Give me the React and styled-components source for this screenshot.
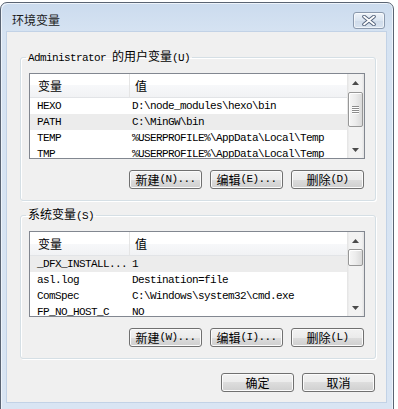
import styled, { createGlobalStyle } from 'styled-components'

const GlobalStyle = createGlobalStyle`
  html, body {
    margin: 0;
    padding: 0;
    background: #ffffff;
  }
  body {
    font-family: "Noto Sans CJK SC", "Liberation Sans", sans-serif;
    font-size: 12px;
    color: #000;
  }
`

const userVars = [
  { name: 'HEXO', value: 'D:\\node_modules\\hexo\\bin' },
  { name: 'PATH', value: 'C:\\MinGW\\bin', selected: true },
  { name: 'TEMP', value: '%USERPROFILE%\\AppData\\Local\\Temp' },
  { name: 'TMP', value: '%USERPROFILE%\\AppData\\Local\\Temp' },
]

const sysVars = [
  { name: '_DFX_INSTALL...', value: '1', selected: true },
  { name: 'asl.log', value: 'Destination=file' },
  { name: 'ComSpec', value: 'C:\\Windows\\system32\\cmd.exe' },
  { name: 'FP_NO_HOST_C', value: 'NO' },
]

function Arrow ({ down })
{
  return (
    <svg width="7" height="4" viewBox="0 0 7 4">
      { down
        ? <polygon points="0,0 7,0 3.5,4" fill="#4a4a4a" />
        : <polygon points="0,4 7,4 3.5,0" fill="#4a4a4a" /> }
    </svg>
  )
}

function ScrollBar ({ thumbTop, thumbHeight })
{
  return (
    <Scroll>
      <ArrowButton><Arrow /></ArrowButton>
      <Track>
        <Thumb $top={ thumbTop } $height={ thumbHeight }>
          { thumbHeight > 24 ? <Grip><i /><i /><i /><i /></Grip> : null }
        </Thumb>
      </Track>
      <ArrowButton><Arrow down /></ArrowButton>
    </Scroll>
  )
}

function VarList ({ rows, thumbTop, thumbHeight })
{
  return (
    <ListBox>
      <Table>
        <HeaderRow>
          <HeaderCell $first>变量</HeaderCell>
          <HeaderCell>值</HeaderCell>
        </HeaderRow>
        { rows.map( ( r, i ) => (
          <Row key={ i } $selected={ r.selected }>
            <NameCell>{ r.name }</NameCell>
            <ValueCell>{ r.value }</ValueCell>
          </Row>
        ) ) }
      </Table>
      <ScrollBar thumbTop={ thumbTop } thumbHeight={ thumbHeight } />
    </ListBox>
  )
}

function App ()
{
  return (
    <>
      <GlobalStyle />
      <Window>
        <TitleBar>
          <Title>环境变量</Title>
          <CloseButton>
            <svg width="14" height="11" viewBox="0 0 14 11">
              <path d="M2 1.5 L12 9.5 M12 1.5 L2 9.5" stroke="#52617a" strokeWidth="3.6" strokeLinecap="round" />
              <path d="M2 1.5 L12 9.5 M12 1.5 L2 9.5" stroke="#ffffff" strokeWidth="1.8" strokeLinecap="round" />
            </svg>
          </CloseButton>
        </TitleBar>
        <Client>
          <Group>
            <Legend><Ascii>Administrator </Ascii>的用户变量<Ascii>(U)</Ascii></Legend>
            <VarList rows={ userVars } thumbTop={ 1 } thumbHeight={ 35 } />
            <ButtonRow>
              <Button>新建<Ascii>(N)...</Ascii></Button>
              <Button>编辑<Ascii>(E)...</Ascii></Button>
              <Button>删除<Ascii>(D)</Ascii></Button>
            </ButtonRow>
          </Group>
          <Group $second>
            <Legend>系统变量<Ascii>(S)</Ascii></Legend>
            <VarList rows={ sysVars } thumbTop={ 0 } thumbHeight={ 17 } />
            <ButtonRow>
              <Button>新建<Ascii>(W)...</Ascii></Button>
              <Button>编辑<Ascii>(I)...</Ascii></Button>
              <Button>删除<Ascii>(L)</Ascii></Button>
            </ButtonRow>
          </Group>
          <DialogButtons>
            <Button>确定</Button>
            <Button>取消</Button>
          </DialogButtons>
        </Client>
      </Window>
    </>
  )
}

const Window = styled.div`
  margin-top: 2px;
  width: 394px;
  box-sizing: border-box;
  border: 1px solid #5a6473;
  border-radius: 7px 7px 0 0;
  background: linear-gradient(#cbdbee 0px, #d6e3f2 30px, #d9e5f3 100%);
  box-shadow: inset 1px 1px 0 #eef4fb, inset -1px 0 0 #eef4fb;
  display: flex;
  flex-direction: column;
`

const TitleBar = styled.div`
  height: 29px;
  box-sizing: border-box;
  padding: 5px 8px 0 11px;
  display: flex;
  align-items: center;
`

const Title = styled.div`
  font-size: 12px;
  line-height: 16px;
  color: #1b1b1b;
`

const CloseButton = styled.div`
  margin-left: auto;
  width: 32px;
  height: 17px;
  box-sizing: border-box;
  border: 1px solid #8b99ad;
  border-radius: 3px;
  background: linear-gradient(#eef3f9, #dbe5f1 50%, #cfdbea 51%, #d8e3f0);
  box-shadow: inset 0 0 0 1px rgba(255, 255, 255, 0.6);
  display: flex;
  align-items: center;
  justify-content: center;
`

const Client = styled.div`
  margin: 0 7px 9px 6px;
  padding: 17px 10px 10px 13px;
  background: #f0f0f0;
  box-shadow: 0 0 0 1px #c2d2e6;
  display: flex;
  flex-direction: column;
`

const Group = styled.fieldset`
  margin: ${ p => p.$second ? '6px' : '0' } 0 0 0;
  padding: 8px 10px 11px 8px;
  min-width: 0;
  border: 1px solid #d5dfe5;
  border-radius: 3px;
  box-shadow: inset 1px 1px 0 #fff, 1px 1px 0 #fff;
`

const Legend = styled.legend`
  padding: 0 2px;
  margin-left: -3px;
  font-size: 12px;
  line-height: 14px;
`

const Ascii = styled.span`
  font-family: "Liberation Mono", monospace;
  font-size: 11px;
  letter-spacing: -0.6px;
`

const ListBox = styled.div`
  height: 86px;
  box-sizing: border-box;
  border: 1px solid #828790;
  background: #fff;
  display: flex;
  overflow: hidden;
`

const Table = styled.div`
  flex: 1;
  min-width: 0;
  overflow: hidden;
`

const HeaderRow = styled.div`
  display: flex;
  height: 24px;
  box-sizing: border-box;
  border-bottom: 1px solid #e2e4e7;
  background: linear-gradient(#ffffff 0%, #ffffff 50%, #f7f8fa 50%, #f1f2f4 100%);
`

const HeaderCell = styled.div`
  ${ p => p.$first ? 'width: 100px; border-right: 1px solid #e5e5e5; padding-left: 8px;' : 'flex: 1; padding-left: 5px;' }
  box-sizing: border-box;
  font-size: 12px;
  line-height: 23px;
  color: #000;
`

const Row = styled.div`
  display: flex;
  height: 16px;
  background: ${ p => p.$selected ? '#ececec' : 'transparent' };
  font-family: "Liberation Mono", monospace;
  font-size: 11px;
  letter-spacing: -0.6px;
  line-height: 16px;
  white-space: nowrap;
`

const NameCell = styled.div`
  width: 100px;
  box-sizing: border-box;
  padding-left: 7px;
  overflow: hidden;
`

const ValueCell = styled.div`
  flex: 1;
  padding-left: 2px;
  overflow: hidden;
`

const Scroll = styled.div`
  width: 17px;
  flex: none;
  display: flex;
  flex-direction: column;
  background: linear-gradient(to right, #e3e3e3, #f2f2f2 15%, #f2f2f2 85%, #e3e3e3);
`

const ArrowButton = styled.div`
  height: 17px;
  flex: none;
  display: flex;
  align-items: center;
  justify-content: center;
`

const Track = styled.div`
  flex: 1;
  display: flex;
  flex-direction: column;
`

const Thumb = styled.div`
  margin: ${ p => p.$top }px 1px 0 1px;
  height: ${ p => p.$height }px;
  box-sizing: border-box;
  border: 1px solid #979797;
  border-radius: 2px;
  background: linear-gradient(to right, #f6f6f6, #ececec 50%, #dadada);
  box-shadow: inset 1px 1px 0 #fff;
  display: flex;
  align-items: center;
  justify-content: center;
`

const Grip = styled.div`
  display: flex;
  flex-direction: column;
  gap: 1px;
  i {
    display: block;
    width: 7px;
    height: 1px;
    background: #8c8c8c;
    box-shadow: 0 1px 0 #fff;
  }
`

const ButtonRow = styled.div`
  margin-top: 11px;
  display: flex;
  justify-content: flex-end;
  gap: 8px;
  padding-right: 1px;
`

const DialogButtons = styled(ButtonRow)`
  margin-top: 14px;
`

const Button = styled.div`
  width: 73px;
  height: 19px;
  box-sizing: border-box;
  border: 1px solid #707070;
  border-radius: 3px;
  background: linear-gradient(#f2f2f2 0%, #ebebeb 50%, #dddddd 50%, #cfcfcf 100%);
  box-shadow: inset 0 0 0 1px #fbfbfb;
  display: flex;
  align-items: center;
  justify-content: center;
  font-size: 12px;
  line-height: 17px;
  color: #000;
  white-space: nowrap;
`

export default App
